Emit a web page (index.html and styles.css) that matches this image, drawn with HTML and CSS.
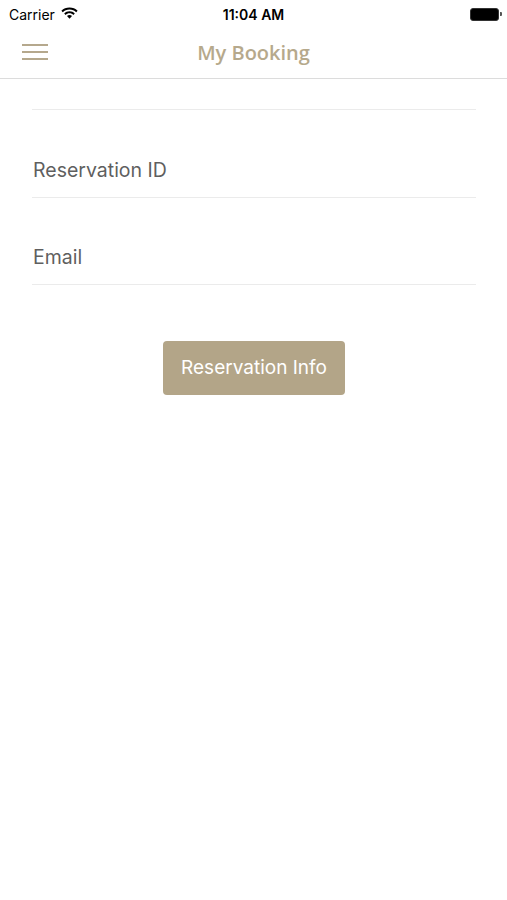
FILE: index.html
```html
<!DOCTYPE html>
<html lang="en">
<head>
  <meta charset="UTF-8" />
  <meta name="viewport" content="width=device-width, initial-scale=1.0"/>
  <title>My Booking</title>
  <link rel="stylesheet" href="styles.css">
</head>
<body>

<div class="status-bar">
  <div class="carrier">
    Carrier
    <svg class="wifi" width="17" height="12" viewBox="0 0 17 12">
      <path d="M8.5 0.5C5.3 0.5 2.5 1.7 0.4 3.7L1.8 5.2C3.5 3.5 5.9 2.5 8.5 2.5S13.5 3.5 15.2 5.2L16.6 3.7C14.5 1.7 11.7 0.5 8.5 0.5Z" fill="#000"/>
      <path d="M8.5 4.3C6.4 4.3 4.6 5.1 3.2 6.4L4.6 7.9C5.6 6.9 7 6.3 8.5 6.3S11.4 6.9 12.4 7.9L13.8 6.4C12.4 5.1 10.6 4.3 8.5 4.3Z" fill="#000"/>
      <path d="M8.5 8.1C7.5 8.1 6.6 8.5 6 9.1L8.5 11.7L11 9.1C10.4 8.5 9.5 8.1 8.5 8.1Z" fill="#000"/>
    </svg>
  </div>
  <div class="time">11:04 AM</div>
  <div class="battery">
    <span class="battery-body"></span>
    <span class="battery-nub"></span>
  </div>
</div>

<header class="nav">
  <div class="menu">
    <span></span><span></span><span></span>
  </div>
  <h1>My Booking</h1>
</header>

<section class="form">
  <div class="field field-short"></div>
  <div class="field field-id">Reservation ID</div>
  <div class="field">Email</div>
  <div class="actions">
    <a class="btn" href="#">Reservation Info</a>
  </div>
</section>

</body>
</html>
```

FILE: styles.css
```css
body {
  font-family: Inter, 'Open Sans', sans-serif;
  background: #fff;
  margin: 0;
  padding: 0;
}
.status-bar {
  height: 28px;
  display: flex;
  align-items: center;
  justify-content: space-between;
  padding: 0 5px 0 9px;
  position: relative;
  font-size: 14px;
  color: #000;
}
.carrier {
  display: flex;
  align-items: center;
  gap: 6px;
}
.wifi {
  margin-top: -3px;
}
.time {
  position: absolute;
  left: 0;
  right: 0;
  text-align: center;
  font-weight: 600;
}
.battery {
  display: flex;
  align-items: center;
}
.battery-body {
  width: 27px;
  height: 11px;
  background: #000;
  border-radius: 3px;
  border: 1px solid #333;
}
.battery-nub {
  width: 2px;
  height: 4px;
  background: #555;
  border-radius: 0 1px 1px 0;
  margin-left: 1px;
}
.nav {
  height: 50px;
  border-bottom: 1px solid #dcdcdc;
  display: flex;
  align-items: center;
  justify-content: center;
  position: relative;
}
.menu {
  position: absolute;
  left: 22px;
  top: 16px;
  display: flex;
  flex-direction: column;
  gap: 5px;
}
.menu span {
  display: block;
  width: 26px;
  height: 2px;
  background: #b5a88d;
}
.nav h1 {
  margin: 0;
  font-family: 'Open Sans', sans-serif;
  font-size: 20px;
  font-weight: 600;
  color: #b6a98c;
  margin-top: -2px;
}
.form {
  padding: 0 31px 0 32px;
}
.field {
  height: 87px;
  box-sizing: border-box;
  border-bottom: 1px solid #ebebeb;
  display: flex;
  align-items: flex-end;
  padding: 0 0 15px 1px;
  font-size: 19.5px;
  line-height: 24px;
  color: #5f5f5f;
}
.field-short {
  height: 31px;
}
.field-id {
  height: 88px;
}
.actions {
  text-align: center;
  margin-top: 56px;
}
.btn {
  display: inline-block;
  width: 182px;
  height: 54px;
  line-height: 54px;
  background-color: #b3a588;
  color: #fff;
  font-size: 19px;
  border-radius: 4px;
  text-decoration: none;
}
```
